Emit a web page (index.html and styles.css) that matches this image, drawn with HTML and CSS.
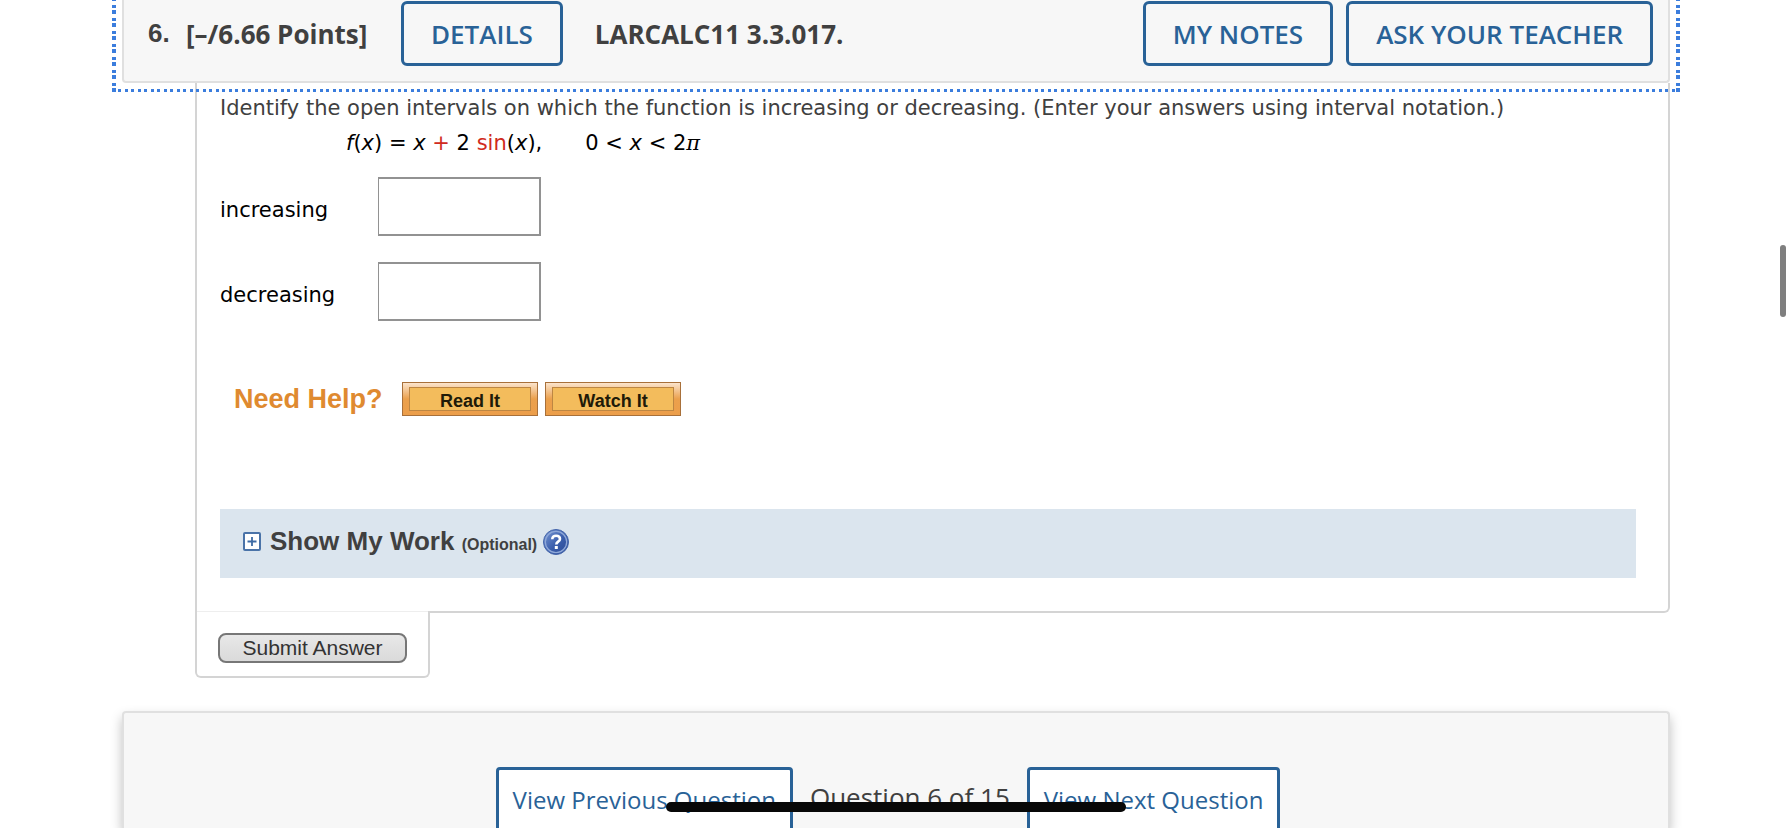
FILE: index.html
```html
<!DOCTYPE html>
<html lang="en">
<head>
<meta charset="utf-8">
<title>LARCALC11 3.3.017.</title>
<link rel="stylesheet" href="styles.css">
</head>
<body>
<main class="page">
  <section class="question">
    <header class="question-header">
      <span class="number">6.</span>
      <span class="points">[–/6.66 Points]</span>
      <button class="btn" type="button">DETAILS</button>
      <h2 class="code">LARCALC11 3.3.017.</h2>
      <div class="actions">
        <button class="btn" type="button">MY NOTES</button>
        <button class="btn" type="button">ASK YOUR TEACHER</button>
      </div>
      <span class="focus-ring"></span>
    </header>
    <div class="question-body">
      <p class="prompt">Identify the open intervals on which the function is increasing or decreasing. (Enter your answers using interval notation.)</p>
      <p class="formula"><span><i>f</i>(<i>x</i>) = <i>x</i> <span class="red">+</span> 2 <span class="red">sin</span>(<i>x</i>),</span><span>0 &lt; <i>x</i> &lt; 2<i class="pi">π</i></span></p>
      <div class="answer"><label for="inc">increasing</label><input id="inc" type="text"></div>
      <div class="answer"><label for="dec">decreasing</label><input id="dec" type="text"></div>
      <div class="help">
        <span class="help-title">Need Help?</span>
        <button class="help-btn" type="button">Read It</button>
        <button class="help-btn" type="button">Watch It</button>
      </div>
      <div class="work">
        <button class="icon-btn" type="button" aria-label="Expand">
          <svg width="18" height="19" viewBox="0 0 18 19"><rect x="1" y="1" width="16" height="17" rx="1" fill="#fff" stroke="#4a73a8" stroke-width="2"/><path d="M4.500 9.500h9M9 5v9" stroke="#3e6ca5" stroke-width="1.800"/></svg>
        </button>
        <h3 class="work-title">Show My Work <small>(Optional)</small></h3>
        <button class="icon-btn" type="button" aria-label="Help">
          <svg width="26" height="26" viewBox="0 0 26 26"><defs><linearGradient id="g" x1="0" y1="0" x2="1" y2="1"><stop offset="0" stop-color="#7c9bd6"/><stop offset=".55" stop-color="#3a5dab"/><stop offset="1" stop-color="#2b4a94"/></linearGradient></defs><circle cx="13" cy="13" r="12.500" fill="url(#g)" stroke="#4465aa"/><circle cx="13" cy="13" r="10.700" fill="none" stroke="#8fa8d8" stroke-width="1.300"/><path d="M9.300 10.300C9.300 7.900 11 6.700 13.100 6.700c2.200 0 3.900 1.200 3.900 3.200 0 2.700-3.700 2.800-3.700 5.500" fill="none" stroke="#fff" stroke-width="2.600"/><rect x="11.800" y="17" width="3" height="3" fill="#fff"/></svg>
        </button>
      </div>
    </div>
    <div class="submit-tab"><button class="submit" type="button">Submit Answer</button></div>
  </section>
  <nav class="pager">
    <a class="pager-link" href="#prev">View Previous Question</a>
    <span class="pager-status">Question 6 of 15</span>
    <a class="pager-link" href="#next">View Next Question</a>
  </nav>
</main>
<div class="home-bar"></div>
<div class="scroll-thumb"></div>
</body>
</html>
```
FILE: styles.css
```css
* { box-sizing: border-box; }
html { overflow: hidden; }
body {
  display: flex;
  flex-direction: column;
  margin: 0;
  height: 100vh;
  overflow: hidden;
  background: #fff;
  color: #404040;
  font-family: "DejaVu Sans", sans-serif;
  font-size: 21px;
}
button { cursor: pointer; }
h2, h3, p { margin: 0; }
.page {
  display: flex;
  flex: 1;
  flex-direction: column;
  min-height: 0;
  padding: 0 122px;
}
.question { flex: none; }
.question-header {
  position: relative;
  display: flex;
  align-items: flex-start;
  height: 83px;
  padding: 1px 15px 0 24px;
  background: #f7f7f7;
  border: 2px solid #e0e0e0;
  border-top: 0;
  border-radius: 0 0 4px 4px;
  font: 700 26px/66px "Open Sans", sans-serif;
}
.number { width: 38px; font: 700 26px/64px "Liberation Sans", sans-serif; }
.points { width: 215px; white-space: nowrap; }
.btn {
  height: 65px;
  padding: 0 27px;
  background: transparent;
  border: 3px solid #296297;
  border-radius: 6px;
  color: #296297;
  font: 600 26px/56px "Open Sans", sans-serif;
}
.code { margin-left: 32px; font-size: 26px; }
.actions { display: flex; gap: 13px; margin-left: auto; }
.focus-ring {
  position: absolute;
  inset: 0 -12px -11px;
  pointer-events: none;
  background:
    repeating-linear-gradient(to right, #3b7ddd 0 3px, transparent 3px 6px, #3b7ddd 6px 9px, transparent 9px 13px) 0 100% / 100% 3px no-repeat,
    repeating-linear-gradient(to top, #3b7ddd 0 4px, transparent 4px 6px, #3b7ddd 6px 9px, transparent 9px 13px) 0 0 / 4px 100% no-repeat,
    repeating-linear-gradient(to top, #3b7ddd 0 4px, transparent 4px 6px, #3b7ddd 6px 9px, transparent 9px 13px) 100% 0 / 4px 100% no-repeat;
}
.question-body {
  margin-left: 73px;
  padding: 12px 32px 33px 23px;
  border: 2px solid #d4d4d4;
  border-top: 0;
  border-radius: 0 0 6px 0;
}
.prompt { line-height: 26px; }
.formula {
  display: flex;
  gap: 43px;
  padding-left: 126px;
  margin: 8px 0 19px;
  color: #000;
  line-height: 29px;
}
.red { color: #d02a20; }
.pi { font-family: "DejaVu Serif", serif; }
.answer {
  display: flex;
  align-items: center;
  margin-bottom: 26px;
  color: #000;
}
.answer label { width: 158px; padding-top: 6px; }
.answer input {
  width: 163px;
  height: 59px;
  padding: 0 8px;
  border: 2px solid #929292;
  border-left-width: 1px;
  background: #fff;
  font: inherit;
}
.help {
  display: flex;
  align-items: center;
  gap: 7px;
  margin: 61px 0 93px 14px;
}
.help-title {
  width: 161px;
  color: #df8a30;
  font: 700 27px/34px "Liberation Sans", sans-serif;
}
.help-btn {
  width: 136px;
  height: 34px;
  padding: 3px 0 0;
  border: 1px solid #a8703a;
  background:
    linear-gradient(#f3bc5c, #f3bc5c) 50% 50% / 120px 22px no-repeat,
    linear-gradient(#fbe4cc, #eba04c 50%, #ec9e4a);
  color: #201a08;
  font: 700 18px/28px "Liberation Sans", sans-serif;
  position: relative;
}
.help-btn::before {
  content: "";
  position: absolute;
  inset: 4px 6px;
  border: 1px solid #bd8642;
}
.work {
  display: flex;
  align-items: center;
  height: 69px;
  padding: 0 23px 4px;
  background: #dbe5ee;
  font-family: "Liberation Sans", sans-serif;
}
.icon-btn { display: flex; padding: 0; border: 0; background: none; }
.work-title { margin: 0 6px 0 9px; font-size: 26px; }
.work-title small { font-size: 16px; }
.submit-tab {
  width: 235px;
  height: 67px;
  margin: -2px 0 33px 73px;
  padding: 22px 20px 0 21px;
  position: relative;
  background: #fff;
  border: 2px solid #d4d4d4;
  border-top: 0;
  border-radius: 0 0 6px 6px;
  box-shadow: inset 0 1px #eee;
}
.submit {
  width: 189px;
  height: 30px;
  padding: 0;
  border: 2px solid #777;
  border-radius: 8px;
  background: linear-gradient(#e8e8e8, #dadada);
  color: #333;
  font: 21px/24px "Liberation Sans", sans-serif;
}
.pager {
  display: flex;
  flex: 1;
  justify-content: center;
  min-height: 0;
  overflow: hidden;
  padding: 54px 16px 0 0;
  background: #f7f7f7;
  border: 2px solid #e0e0e0;
  border-bottom: 0;
  border-radius: 4px 4px 0 0;
  box-shadow: 0 6px 12px rgba(0, 0, 0, .25);
  font: 24px/60px "Open Sans", sans-serif;
}
.pager-link {
  height: 66px;
  padding: 0 14px;
  background: #fff;
  border: 3px solid #296297;
  border-radius: 4px;
  color: #296297;
  text-decoration: none;
}
.pager-status { padding: 0 17px; font-size: 26px; }
.home-bar {
  position: fixed;
  left: 50%;
  bottom: 16px;
  width: 460px;
  height: 10px;
  margin-left: -230px;
  border-radius: 5px;
  background: #080808;
}
.scroll-thumb {
  position: fixed;
  top: 245px;
  right: 6px;
  width: 6px;
  height: 72px;
  border-radius: 3px;
  background: #7f7f7f;
}
```
